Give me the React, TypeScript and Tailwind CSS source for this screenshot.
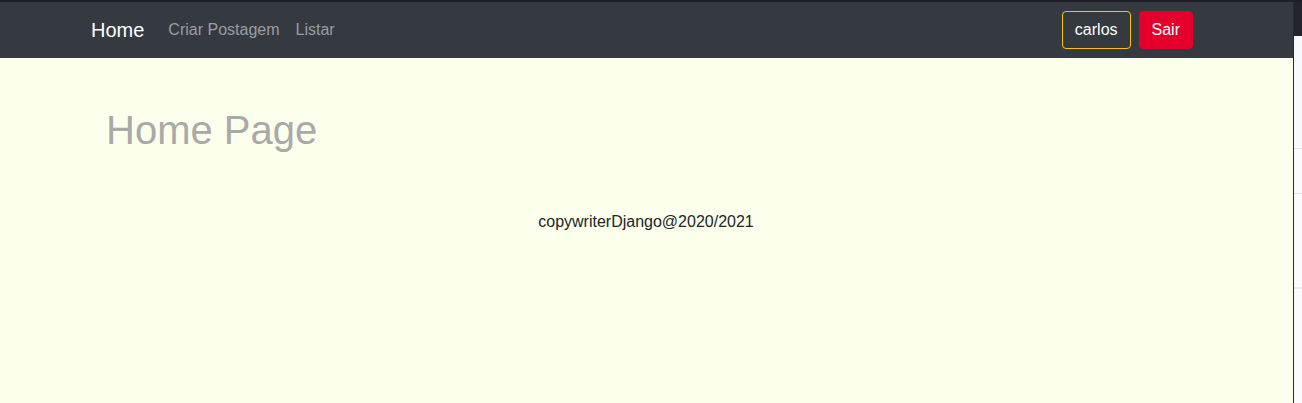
import React from "react";

export default function App() {
  return (
    <div
      className="flex h-[403px] w-[1302px] flex-col overflow-hidden bg-[#1f2127]"
      style={{ fontFamily: '"Liberation Sans", Arial, sans-serif' }}
    >
      <div className="h-[2px] shrink-0 bg-[#1f2127]" />
      <div className="flex flex-1">
        <div className="flex w-[1293px] flex-col bg-[#fbffec]">
          <nav className="flex h-[56px] items-center justify-between bg-[#343a40] pl-[91px] pr-[100px]">
            <div className="flex items-center">
              <span className="mr-[24px] text-[20px] leading-[30px] text-white">Home</span>
              <span className="mr-[16px] text-[16px] leading-[24px] text-[#9a9da0]">Criar Postagem</span>
              <span className="text-[16px] leading-[24px] text-[#9a9da0]">Listar</span>
            </div>
            <div className="flex items-center gap-[8px]">
              <button className="h-[38px] rounded-[4px] border border-[#ffc107] px-[12px] text-[16px] leading-[24px] text-white">
                carlos
              </button>
              <button className="h-[38px] rounded-[4px] border border-[#e4002b] bg-[#e4002b] px-[12px] text-[16px] leading-[24px] text-white">
                Sair
              </button>
            </div>
          </nav>
          <h1 className="mt-[48px] pl-[106px] text-[40px] leading-[48px] font-normal text-[#a9a9a9]">
            Home Page
          </h1>
          <p className="mt-[56px] pr-px text-center text-[16px] leading-[24px] text-[#212529]">
            copywriterDjango@2020/2021
          </p>
        </div>
        <div className="w-px bg-[#2a2a2a]" />
        <div className="flex w-[8px] flex-col">
          <div className="h-[34px] bg-[#22252c]" />
          <div className="h-[112px] bg-[#f8f9fc]" />
          <div className="h-px bg-[#e2e3e8]" />
          <div className="h-[44px] bg-[#fbfbfd]" />
          <div className="h-px bg-[#e2e3e8]" />
          <div className="h-[93px] bg-[#fbfbfd]" />
          <div className="h-[2px] bg-[#ececf0]" />
          <div className="flex-1 bg-[#fbfbfd]" />
        </div>
      </div>
    </div>
  );
}
